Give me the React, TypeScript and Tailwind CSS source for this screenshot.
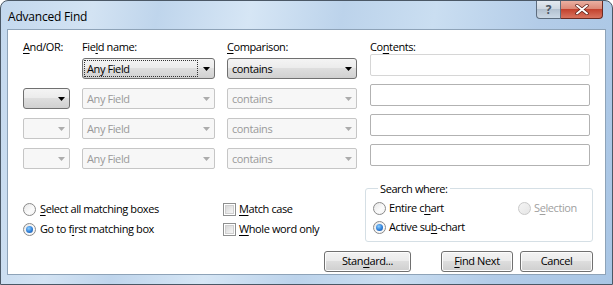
import React from 'react';

function U({ children }: { children: React.ReactNode }) {
  return <span className="underline decoration-1 underline-offset-[2px]">{children}</span>;
}

function Arrow({ disabled }: { disabled?: boolean }) {
  return (
    <svg width="7" height="4" viewBox="0 0 7 4">
      <path d="M0 0h7L3.5 4z" fill={disabled ? '#acacac' : '#000'} />
    </svg>
  );
}

function Combo({ text, disabled, focused, className = '' }: { text?: string; disabled?: boolean; focused?: boolean; className?: string }) {
  if (disabled) {
    return (
      <div className={`h-[21px] flex items-center rounded-[2px] border border-[#c6c6c6] bg-[#f7f7f7] text-[#9a9a9a] ${className}`}>
        <span className="flex-1 pl-[4px] leading-[19px]">{text}</span>
        <span className="w-[16px] flex justify-center">
          <Arrow disabled />
        </span>
      </div>
    );
  }
  return (
    <div
      className={`h-[21px] flex items-center rounded-[3px] border border-[#707070] bg-[linear-gradient(#f4f4f4_0%,#ececec_45%,#dedede_50%,#d0d0d0_100%)] text-black ${className}`}
    >
      <span className="flex-1 flex items-center pl-[1px] h-full py-[1px]">
        {focused ? (
          <span className="flex-1 h-full border border-dotted border-[#333] pl-[2px] leading-[16px]">{text}</span>
        ) : (
          <span className="pl-[3px] leading-[19px]">{text}</span>
        )}
      </span>
      <span className="w-[16px] flex justify-center">
        <Arrow />
      </span>
    </div>
  );
}

function TextBox({ light }: { light?: boolean }) {
  return (
    <div
      className={`h-[22px] w-[220px] rounded-[2px] border bg-white ${light ? 'border-[#d6d6d6]' : 'border-[#b2b2b2]'}`}
    />
  );
}

function Radio({ checked, disabled }: { checked?: boolean; disabled?: boolean }) {
  return (
    <span
      className={`w-[13px] h-[13px] rounded-full border flex items-center justify-center shrink-0 ${
        disabled
          ? 'border-[#c9c9c9] bg-[linear-gradient(135deg,#f4f4f4,#e6e6e6)]'
          : 'border-[#8a8a8a] bg-[linear-gradient(135deg,#e6e6e6,#fbfbfb_60%,#f0f0f0)]'
      }`}
    >
      {checked && (
        <span className="w-[7px] h-[7px] rounded-full bg-[radial-gradient(circle_at_40%_35%,#8fd0ff_0%,#2f7fd8_55%,#1a4f9a_100%)]" />
      )}
    </span>
  );
}

function CheckBox() {
  return (
    <span className="w-[13px] h-[13px] border border-[#8e8f8f] bg-white p-[1px] shrink-0 flex">
      <span className="flex-1 bg-[linear-gradient(135deg,#d8d8d8,#f6f6f6)] border border-[#cfcfcf]" />
    </span>
  );
}

function Button({ children, className = '' }: { children: React.ReactNode; className?: string }) {
  return (
    <div
      className={`h-[21px] rounded-[3px] border border-[#707070] bg-[linear-gradient(#f3f3f3_0%,#ebebeb_45%,#dddddd_50%,#cfcfcf_100%)] flex items-center justify-center shadow-[inset_0_0_0_1px_#fcfcfc] ${className}`}
    >
      {children}
    </div>
  );
}

export default function App() {
  const rows = [0, 1, 2, 3];
  return (
    <div className="w-[613px] h-[285px] font-['Open_Sans',sans-serif] text-[11px] tracking-[-0.4px] text-black">
      <div className="w-full h-full flex flex-col rounded-t-[8px] border border-[#4b5866] bg-[linear-gradient(100deg,#c3d8ee_0%,#d3e3f3_14%,#bfd5ec_24%,#d6e6f5_38%,#bcd3eb_52%,#cadef1_66%,#b3cce8_82%,#a9c6e5_100%)]">
        {/* title bar */}
        <div className="h-[28px] flex items-start shrink-0">
          <span className="pl-[7px] pt-[8px] leading-[16px] text-[12px] tracking-[-0.2px] text-black">Advanced Find</span>
          <div className="ml-auto mr-[9px] flex h-[18px]">
            <div className="w-[25px] h-[18px] rounded-bl-[4px] border border-t-0 border-[#5d6c7e] bg-[linear-gradient(#e3e9f0_0%,#cfd8e2_45%,#b3c1d0_50%,#cbd8e5_100%)] flex items-center justify-center text-[#4b5563] text-[12px] font-bold leading-[16px]">
              ?
            </div>
            <div className="w-[42px] h-[18px] rounded-br-[4px] border border-l-0 border-t-0 border-[#6b2a22] bg-[linear-gradient(#eab0a2_0%,#dc8a78_45%,#c3432f_50%,#d8735f_100%)] flex items-center justify-center">
              <svg width="14" height="11" viewBox="0 0 14 11">
                <path d="M2 1.5l10 8M12 1.5l-10 8" stroke="#5a1d16" strokeWidth="3.4" strokeLinecap="round" />
                <path d="M2 1.5l10 8M12 1.5l-10 8" stroke="#fff" strokeWidth="2" strokeLinecap="round" />
              </svg>
            </div>
          </div>
        </div>

        {/* client area */}
        <div className="mx-[6px] h-[246px] border border-[#8ea3b8] bg-white pl-[15px] pt-[9px] flex flex-col">
          <div className="grid grid-cols-[47px_133px_131px_220px] gap-x-[12px] h-[15px] leading-[15px]">
            <span>
              <U>A</U>nd/OR:
            </span>
            <span>
              Fie<U>l</U>d name:
            </span>
            <span>
              <U>C</U>omparison:
            </span>
            <span>
              Co<U>n</U>tents:
            </span>
          </div>
          <div className="flex flex-col gap-[5px]">
            {rows.map((r) => (
              <div key={r} className="grid grid-cols-[47px_133px_131px_220px] gap-x-[12px] h-[25px]">
                <div className="self-end">
                  {r === 1 && <Combo />}
                  {r > 1 && <Combo disabled />}
                </div>
                <Combo className="self-end" text="Any Field" disabled={r > 0} focused={r === 0} />
                <Combo className="self-end w-[130px]" text="contains" disabled={r > 0} />
                <div className="self-start">
                  <TextBox light={r === 0} />
                </div>
              </div>
            ))}
          </div>

          <div className="mt-[12px] flex items-start">
            <div className="w-[200px] pt-[18px] flex flex-col">
              <label className="h-[20px] flex items-center gap-[3px]">
                <Radio />
                <span className="pl-[1px]">
                  <U>S</U>elect all matching boxes
                </span>
              </label>
              <label className="h-[20px] flex items-center gap-[3px]">
                <Radio checked />
                <span className="pl-[1px]">
                  Go to f<U>i</U>rst matching box
                </span>
              </label>
            </div>
            <div className="w-[142px] pt-[18px] flex flex-col">
              <label className="h-[20px] flex items-center gap-[3px]">
                <CheckBox />
                <span>
                  <U>M</U>atch case
                </span>
              </label>
              <label className="h-[20px] flex items-center gap-[3px]">
                <CheckBox />
                <span>
                  <U>W</U>hole word only
                </span>
              </label>
            </div>
            <fieldset className="w-[228px] border border-[#d5dfe5] rounded-[3px] pl-[7px] pt-[3px] pb-[4px]">
              <legend className="ml-[5px] px-[2px] leading-[15px]">Search where:</legend>
              <div className="h-[19px] flex items-center">
                <label className="w-[145px] flex items-center gap-[3px]">
                  <Radio />
                  <span>
                    Entire c<U>h</U>art
                  </span>
                </label>
                <label className="flex items-center gap-[3px] text-[#a0a0a0]">
                  <Radio disabled />
                  <span>
                    S<U>e</U>lection
                  </span>
                </label>
              </div>
              <div className="h-[19px] flex items-center">
                <label className="flex items-center gap-[3px]">
                  <Radio checked />
                  <span>
                    Active su<U>b</U>-chart
                  </span>
                </label>
              </div>
            </fieldset>
          </div>

          <div className="mt-[9px] flex justify-end pr-[12px]">
            <Button className="w-[87px] mr-[30px]">
              <span>
                Stan<U>d</U>ard...
              </span>
            </Button>
            <Button className="w-[72px] mr-[7px]">
              <span>
                <U>F</U>ind Next
              </span>
            </Button>
            <Button className="w-[73px]">Cancel</Button>
          </div>
        </div>
      </div>
    </div>
  );
}
